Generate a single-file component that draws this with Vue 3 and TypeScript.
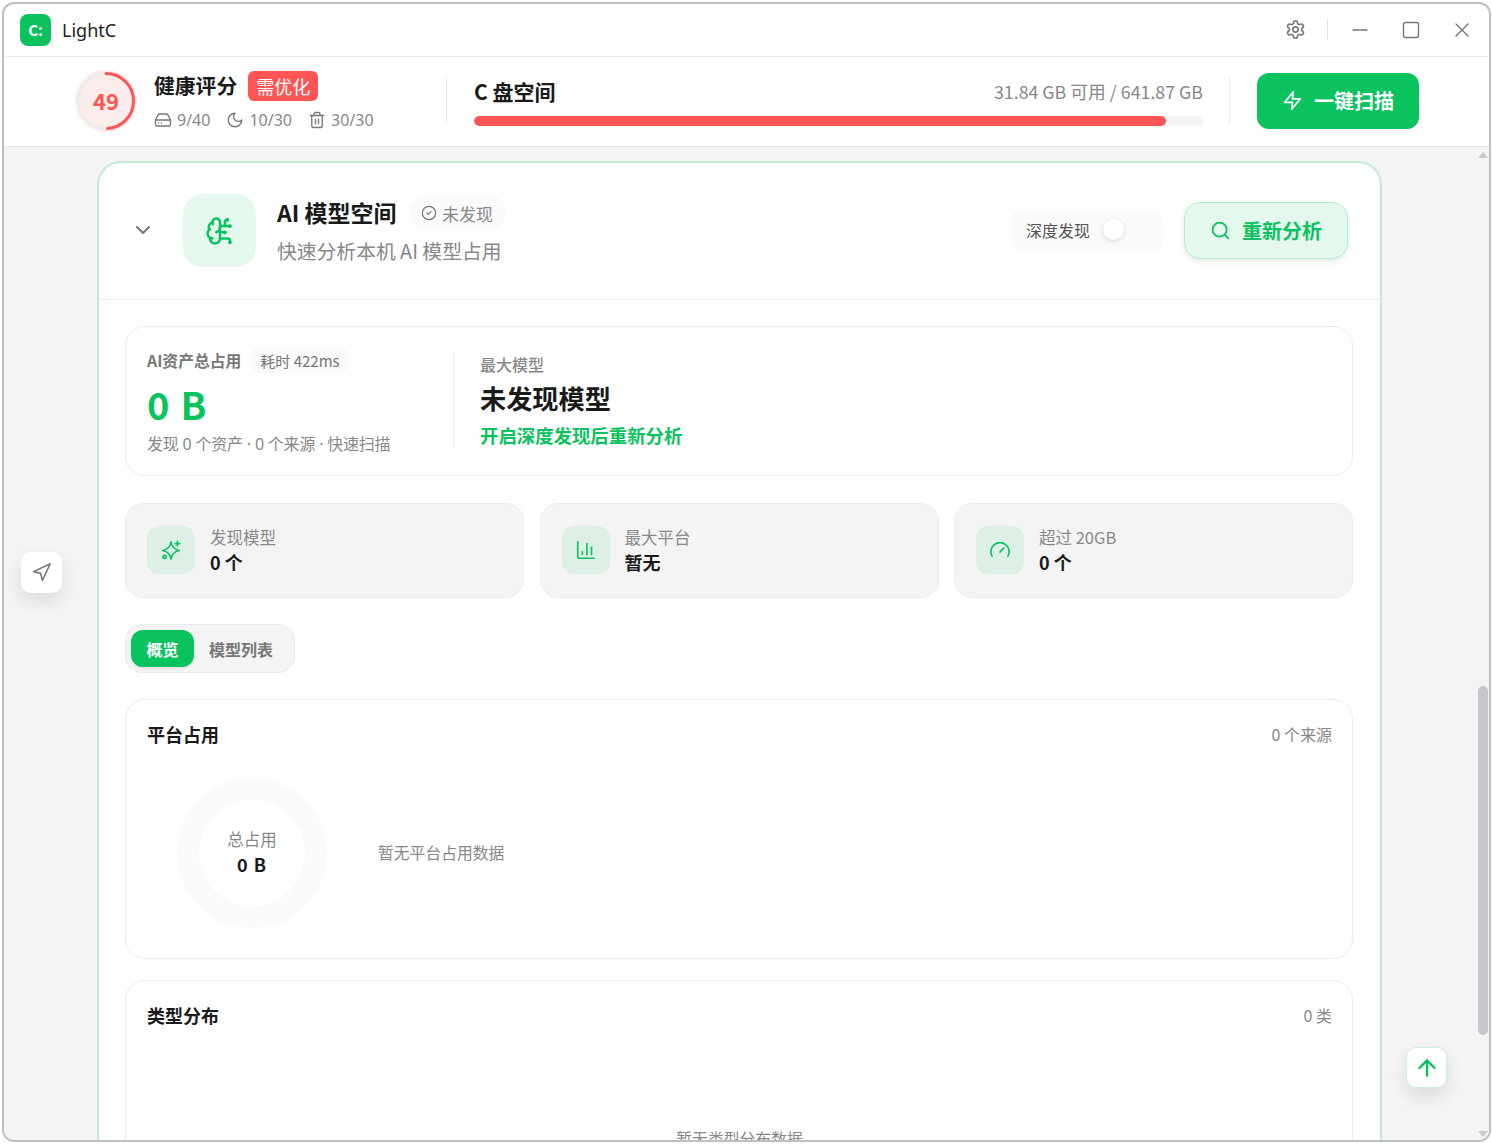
<script setup lang="ts">
const stats: { label: string; value: string; icon: string }[] = [
  { label: '发现模型', value: '0 个', icon: 'spark' },
  { label: '最大平台', value: '暂无', icon: 'chart' },
  { label: '超过 20GB', value: '0 个', icon: 'gauge' },
]
const used = 94.9
</script>

<template>
  <div class="window">
    <div class="titlebar">
      <div class="logo">C:</div>
      <div class="appname">LightC</div>
      <div class="winctl">
        <svg class="ic-settings" viewBox="0 0 24 24"><path d="M12.22 2h-.44a2 2 0 0 0-2 2v.18a2 2 0 0 1-1 1.73l-.43.25a2 2 0 0 1-2 0l-.15-.08a2 2 0 0 0-2.73.73l-.22.38a2 2 0 0 0 .73 2.73l.15.1a2 2 0 0 1 1 1.72v.51a2 2 0 0 1-1 1.74l-.15.09a2 2 0 0 0-.73 2.73l.22.38a2 2 0 0 0 2.73.73l.15-.08a2 2 0 0 1 2 0l.43.25a2 2 0 0 1 1 1.73V20a2 2 0 0 0 2 2h.44a2 2 0 0 0 2-2v-.18a2 2 0 0 1 1-1.73l.43-.25a2 2 0 0 1 2 0l.15.08a2 2 0 0 0 2.73-.73l.22-.39a2 2 0 0 0-.73-2.73l-.15-.08a2 2 0 0 1-1-1.74v-.5a2 2 0 0 1 1-1.74l.15-.09a2 2 0 0 0 .73-2.73l-.22-.38a2 2 0 0 0-2.73-.73l-.15.08a2 2 0 0 1-2 0l-.43-.25a2 2 0 0 1-1-1.73V4a2 2 0 0 0-2-2z"/><circle cx="12" cy="12" r="3"/></svg>
        <span class="ctl-sep"></span>
        <svg class="ic-ctl" viewBox="0 0 20 20"><path d="M3 10h14"/></svg>
        <svg class="ic-ctl" viewBox="0 0 20 20"><rect x="2.500" y="2.500" width="15" height="15" rx="2"/></svg>
        <svg class="ic-ctl" viewBox="0 0 20 20"><path d="M4 4l12 12M16 4L4 16"/></svg>
      </div>
    </div>

    <div class="header">
      <div class="ring">
        <svg viewBox="0 0 62 62" width="62" height="62">
          <circle cx="31" cy="31" r="31" fill="#fdecec" stroke="none"/>
          <circle cx="31" cy="31" r="27.500" fill="none" stroke="#ececec" stroke-width="3"/>
          <circle cx="31" cy="31" r="27.500" fill="none" stroke="#ff5555" stroke-width="3" stroke-linecap="round" stroke-dasharray="84.700 172.800" transform="rotate(-90 31 31)"/>
        </svg>
        <span class="ring-num">49</span>
      </div>
      <div class="health">
        <div class="health-top">
          <span class="health-title">健康评分</span>
          <span class="health-badge">需优化</span>
        </div>
        <div class="health-stats">
          <span class="hs">
            <svg viewBox="0 0 24 24"><path d="M22 12H2"/><path d="M5.45 5.11 2 12v6a2 2 0 0 0 2 2h16a2 2 0 0 0 2-2v-6l-3.45-6.89A2 2 0 0 0 16.76 4H7.24a2 2 0 0 0-1.79 1.11z"/><path d="M6 16h.01M10 16h.01"/></svg>9/40
          </span>
          <span class="hs">
            <svg viewBox="0 0 24 24"><path d="M12 3a6 6 0 0 0 9 9 9 9 0 1 1-9-9Z"/></svg>10/30
          </span>
          <span class="hs">
            <svg viewBox="0 0 24 24"><path d="M3 6h18"/><path d="M19 6v14c0 1-1 2-2 2H7c-1 0-2-1-2-2V6"/><path d="M8 6V4c0-1 1-2 2-2h4c1 0 2 1 2 2v2"/><path d="M10 11v6M14 11v6"/></svg>30/30
          </span>
        </div>
      </div>
      <span class="vsep first"></span>
      <div class="disk">
        <div class="disk-top">
          <span class="disk-title">C 盘空间</span>
          <span class="disk-info">31.84 GB 可用 / 641.87 GB</span>
        </div>
        <div class="bar"><div class="bar-fill" :style="{ width: used + '%' }"></div></div>
      </div>
      <span class="vsep second"></span>
      <button class="scan">
        <svg viewBox="0 0 24 24"><path d="M13 2 3 14h9l-1 8 10-12h-9l1-8z"/></svg>一键扫描
      </button>
    </div>

    <div class="content">
      <section class="card">
        <div class="card-head">
          <svg class="chev" viewBox="0 0 24 24"><path d="m6 9 6 6 6-6"/></svg>
          <div class="brain">
            <svg viewBox="0 0 24 24"><path d="M12 5a3 3 0 1 0-5.997.125 4 4 0 0 0-2.526 5.77 4 4 0 0 0 .556 6.588A4 4 0 1 0 12 18Z"/><path d="M9 13a4.5 4.5 0 0 0 3-4"/><path d="M6.003 5.125A3 3 0 0 0 6.401 6.5"/><path d="M3.477 10.896a4 4 0 0 1 .585-.396"/><path d="M6 18a4 4 0 0 1-1.967-.516"/><path d="M12 13h4"/><path d="M12 18h6a2 2 0 0 1 2 2v1"/><path d="M12 8h8"/><path d="M16 8V5a2 2 0 0 1 2-2"/><circle cx="16" cy="13" r=".5"/><circle cx="18" cy="3" r=".5"/><circle cx="20" cy="21" r=".5"/><circle cx="20" cy="8" r=".5"/></svg>
          </div>
          <div class="head-text">
            <div class="head-line">
              <span class="head-title">AI 模型空间</span>
              <span class="head-badge">
                <svg viewBox="0 0 24 24"><circle cx="12" cy="12" r="10"/><path d="m9 12 2 2 4-4"/></svg>未发现
              </span>
            </div>
            <div class="head-sub">快速分析本机 AI 模型占用</div>
          </div>
          <div class="deep">
            <span>深度发现</span>
            <span class="knob"></span>
          </div>
          <button class="reanalyze">
            <svg viewBox="0 0 24 24"><circle cx="11" cy="11" r="8"/><path d="m21 21-4.3-4.3"/></svg>重新分析
          </button>
        </div>

        <div class="card-body">
          <div class="summary">
            <div class="sum-left">
              <div class="sum-line">
                <span class="sum-label">AI资产总占用</span>
                <span class="sum-pill">耗时 422ms</span>
              </div>
              <div class="sum-size">0 B</div>
              <div class="sum-note">发现 0 个资产 · 0 个来源 · 快速扫描</div>
            </div>
            <div class="sum-right">
              <div class="max-label">最大模型</div>
              <div class="max-name">未发现模型</div>
              <div class="max-hint">开启深度发现后重新分析</div>
            </div>
          </div>

          <div class="stats">
            <div v-for="s in stats" :key="s.label" class="stat">
              <div class="stat-ic">
                <svg v-if="s.icon === 'spark'" viewBox="0 0 24 24"><path d="M12 3c.6 5 3.400 8.400 9 9.500-5.600 1.100-8.400 4.500-9 9.500-.6-5-3.400-8.400-9-9.500 5.600-1.100 8.400-4.500 9-9.500z"/><path d="M19 2.500v5M16.500 5h5"/><circle cx="5" cy="19.500" r="1.600"/></svg>
                <svg v-else-if="s.icon === 'chart'" viewBox="0 0 24 24"><path d="M3 3v16a2 2 0 0 0 2 2h16"/><path d="M18 17V9"/><path d="M13 17V5"/><path d="M8 17v-3"/></svg>
                <svg v-else viewBox="0 0 24 24"><path d="m12 14 4-4"/><path d="M3.340 19a10 10 0 1 1 17.320 0"/></svg>
              </div>
              <div class="stat-text">
                <div class="stat-label">{{ s.label }}</div>
                <div class="stat-value">{{ s.value }}</div>
              </div>
            </div>
          </div>

          <div class="tabs">
            <span class="tab active">概览</span>
            <span class="tab">模型列表</span>
          </div>

          <div class="panel platform">
            <div class="panel-head">
              <span class="panel-title">平台占用</span>
              <span class="panel-side">0 个来源</span>
            </div>
            <div class="platform-body">
              <div class="donut">
                <span class="donut-label">总占用</span>
                <span class="donut-value">0 B</span>
              </div>
              <span class="empty">暂无平台占用数据</span>
            </div>
          </div>

          <div class="panel types">
            <div class="panel-head">
              <span class="panel-title">类型分布</span>
              <span class="panel-side">0 类</span>
            </div>
            <div class="types-empty"><span class="empty">暂无类型分布数据</span></div>
          </div>
        </div>
      </section>

      <div class="scrollbar">
        <span class="arrow up"></span>
        <span class="thumb"></span>
        <span class="arrow down"></span>
      </div>
      <button class="float nav">
        <svg viewBox="0 0 24 24"><path d="M3 11 22 2l-9 19-2-8-8-2z"/></svg>
      </button>
      <button class="float top">
        <svg viewBox="0 0 24 24"><path d="m5 12 7-7 7 7"/><path d="M12 19V5"/></svg>
      </button>
    </div>
  </div>
</template>

<style>
html, body { margin: 0; background: #fff; }
</style>

<style scoped>
* { box-sizing: border-box; }
svg { fill: none; stroke: currentColor; stroke-width: 2; stroke-linecap: round; stroke-linejoin: round; flex: none; display: block; }
button { font: inherit; cursor: pointer; }
.window {
  margin: 2px 0 0 2px; width: 1489px; height: 1140px;
  border: 2px solid #bfbfbf; border-radius: 12px; overflow: hidden;
  display: flex; flex-direction: column; background: #fff;
  font-family: "Noto Sans CJK SC", "Noto Sans", sans-serif; color: #1a1a1a;
}
.titlebar { height: 53px; flex: none; display: flex; align-items: center; padding: 0 17px 1px 16px; border-bottom: 1px solid #e9e9e9; }
.logo { width: 31px; height: 32px; border-radius: 8px; background: #0ac35e; color: #fff; font-size: 15px; font-weight: 700; display: flex; align-items: center; justify-content: center; }
.appname { margin-left: 11px; font-size: 18px; color: #222; font-family: "Noto Sans", sans-serif; }
.winctl { margin-left: auto; display: flex; align-items: center; color: #777; }
.ic-settings { width: 21px; height: 21px; stroke-width: 1.900; }
.ctl-sep { width: 1px; height: 21px; background: #e4e4e4; margin: 0 22px 0 21px; }
.ic-ctl { width: 20px; height: 20px; stroke-width: 1.400; margin-right: 31px; }
.ic-ctl:last-child { margin-right: 0; }

.header { height: 90px; flex: none; display: flex; align-items: center; padding: 0 0 2px 71px; border-bottom: 1px solid #e9e9e9; }
.ring { position: relative; width: 62px; height: 62px; flex: none; }
.ring-num { position: absolute; inset: 0 0 2px; display: flex; align-items: center; justify-content: center; font-size: 22px; font-weight: 700; color: #ff5555; }
.health { margin-left: 17px; width: 292px; flex: none; }
.health-top { display: flex; align-items: center; gap: 11px; height: 30px; }
.health-title { font-size: 20.800px; font-weight: 700; margin-bottom: 2px; }
.health-badge { width: 70px; height: 30px; border-radius: 6px; background: #ff5555; color: #fff; font-size: 18px; display: flex; align-items: center; justify-content: center; }
.health-stats { display: flex; gap: 16px; margin-top: 8px; color: #888; font-family: "Noto Sans", sans-serif; font-size: 16px; line-height: 22px; }
.hs { display: flex; align-items: center; gap: 5px; }
.hs svg { width: 18px; height: 18px; stroke-width: 1.800; color: #777; }
.vsep { width: 1px; height: 47px; background: #ececec; flex: none; }
.first { margin-right: 27px; }
.disk { width: 729px; flex: none; }
.disk-top { display: flex; align-items: center; justify-content: space-between; height: 30px; }
.disk-title { font-size: 21px; font-weight: 700; }
.disk-info { font-size: 17.800px; color: #888; }
.bar { height: 10px; background: #f4f4f4; border-radius: 5px; margin-top: 10px; overflow: hidden; }
.bar-fill { height: 100%; background: #ff5555; border-radius: 5px; }
.second { margin-left: 26px; }
.scan { margin-left: 27px; width: 162px; height: 56px; border: 0; border-radius: 12px; background: #0ac35e; color: #fff; font-size: 20px; font-weight: 700; display: flex; align-items: center; justify-content: center; gap: 11px; }
.scan svg { width: 21px; height: 21px; }

.content { flex: 1; min-height: 0; position: relative; overflow: hidden; background: #f4f4f4; padding: 14px 0 0 93px; }
.card { width: 1285px; background: #fff; border: 2px solid #c2ebd5; border-radius: 24px; }
.card-head { height: 137px; display: flex; align-items: center; padding: 0 32px 1px 32px; border-bottom: 1px solid #ececec; }
.chev { width: 24px; height: 24px; color: #777; margin-bottom: 2px; }
.brain { margin-left: 28px; width: 73px; height: 73px; border-radius: 20px; background: #e5f8ee; color: #0ac35e; display: flex; align-items: center; justify-content: center; }
.brain svg { width: 30px; height: 30px; }
.head-text { margin-left: 21px; }
.head-line { display: flex; align-items: center; gap: 12px; height: 36px; }
.head-title { font-size: 23px; font-weight: 700; margin-bottom: 3px; }
.head-badge { height: 36px; width: 97px; border-radius: 18px; background: #fafafa; color: #888; font-size: 17px; display: flex; align-items: center; justify-content: center; gap: 5px; }
.head-badge svg { width: 16px; height: 16px; stroke-width: 1.800; color: #777; }
.head-sub { margin-top: 5px; font-size: 19.800px; color: #888; line-height: 30px; }
.deep { margin-left: auto; width: 152px; height: 42px; margin-bottom: 2px; border-radius: 12px; background: #fafafa; display: flex; align-items: center; padding-left: 15px; gap: 13px; font-size: 16px; color: #555; }
.knob { width: 21px; height: 21px; border-radius: 50%; background: #fff; box-shadow: 0 1px 4px rgba(0, 0, 0, .15); }
.reanalyze { margin-left: 21px; width: 164px; height: 57px; border: 1.500px solid #b5ecce; border-radius: 16px; background: #e5f8ee; color: #0ac35e; font-size: 20px; font-weight: 700; display: flex; align-items: center; justify-content: center; gap: 11px; box-shadow: 0 2px 6px rgba(0, 0, 0, .1); }
.reanalyze svg { width: 21px; height: 21px; }

.card-body { padding: 26px 27px 0 26px; }
.summary { height: 150px; border: 1px solid #ececec; border-radius: 20px; display: flex; align-items: center; padding-left: 21px; }
.sum-left { width: 307px; height: 96px; flex: none; border-right: 1px solid #ececec; position: relative; }
.sum-line { display: flex; align-items: center; gap: 8px; position: relative; top: -7px; height: 28px; }
.sum-label { font-size: 15.800px; font-weight: 700; color: #777; }
.sum-pill { height: 28px; padding: 0 11px; border-radius: 14px; background: #fafafa; font-size: 15px; color: #777; display: flex; align-items: center; }
.sum-size { font-size: 38px; font-weight: 700; color: #0ac35e; line-height: 48px; letter-spacing: 1.200px; margin-top: -1px; }
.sum-note { font-family: "Noto Sans", "Noto Sans CJK SC", sans-serif; font-size: 16px; letter-spacing: -.2px; color: #888; line-height: 24px; margin-top: 4px; }
.sum-right { padding-left: 26px; margin-top: -3px; }
.max-label { font-size: 16px; font-weight: 500; color: #888; line-height: 24px; }
.max-name { font-size: 26.200px; font-weight: 700; line-height: 38px; margin-top: 3px; }
.max-hint { font-size: 18.400px; font-weight: 700; color: #0ac35e; line-height: 26px; margin-top: 5px; }

.stats { margin-top: 27px; display: grid; grid-template-columns: repeat(3, 1fr); gap: 15.500px; }
.stat { height: 95px; background: #f4f4f4; border: 1px solid #ececec; border-radius: 18px; display: flex; align-items: center; padding: 0 0 2px 21px; gap: 15px; }
.stat-ic { width: 48px; height: 48px; border-radius: 12px; background: #deefe6; color: #0ac35e; display: flex; align-items: center; justify-content: center; }
.stat-ic svg { width: 22px; height: 22px; stroke-width: 1.800; }
.stat-label { font-size: 16.500px; color: #888; line-height: 24px; }
.stat-value { font-size: 18px; font-weight: 700; line-height: 26px; }

.tabs { margin-top: 26px; width: 170px; height: 49px; background: #f4f4f4; border: 1px solid #ececec; border-radius: 16px; display: flex; align-items: center; padding-left: 5px; }
.tab { font-size: 16px; font-weight: 700; color: #777; padding-left: 15px; }
.tab.active { width: 63px; height: 37px; padding: 0; border-radius: 12px; background: #0ac35e; color: #fff; display: flex; align-items: center; justify-content: center; box-shadow: 0 1px 3px rgba(0, 0, 0, .12); }

.panel { margin-top: 26px; border: 1px solid #ececec; border-radius: 20px; padding: 20px 20px 0 21px; background: #fff; }
.panel-head { display: flex; align-items: center; justify-content: space-between; height: 28px; }
.panel-title { font-size: 18px; font-weight: 700; }
.panel-side { font-size: 16px; color: #888; }
.platform { height: 260px; }
.platform-body { display: flex; align-items: center; margin-top: 30px; padding-left: 30px; gap: 51px; }
.donut { width: 150px; height: 150px; padding-bottom: 3px; border-radius: 50%; border: 22px solid #fafafa; display: flex; flex-direction: column; align-items: center; justify-content: center; flex: none; }
.donut-label { font-size: 16.500px; color: #888; line-height: 26px; }
.donut-value { font-size: 18px; font-weight: 700; line-height: 25px; letter-spacing: 1px; }
.empty { font-size: 15.800px; color: #888; }
.platform-body .empty { margin-bottom: 2px; }
.types { height: 260px; margin-top: 21px; }
.types-empty { text-align: center; margin-top: 97px; }

.scrollbar { position: absolute; right: 1px; top: 0; bottom: 0; width: 10px; }
.thumb { position: absolute; left: 0; top: 539px; width: 10px; height: 349px; border-radius: 5px; background: #c8c8cc; }
.arrow { position: absolute; left: 0; width: 0; height: 0; border-left: 5px solid transparent; border-right: 5px solid transparent; }
.arrow.up { top: 5px; border-bottom: 6px solid #c8c8cc; }
.arrow.down { bottom: 3px; border-top: 6px solid #c8c8cc; }
.float { position: absolute; width: 41px; height: 41px; padding: 0; border: 0; border-radius: 10px; background: #fff; display: flex; align-items: center; justify-content: center; box-shadow: 0 8px 18px rgba(0, 0, 0, .1); }
.nav { left: 17px; top: 405px; color: #777; }
.nav svg { width: 21px; height: 21px; stroke-width: 1.800; }
.top { left: 1402px; top: 900px; color: #0ac35e; border: 1px solid #c9f2da; }
.top svg { width: 26px; height: 26px; stroke-width: 2.200; }
</style>
